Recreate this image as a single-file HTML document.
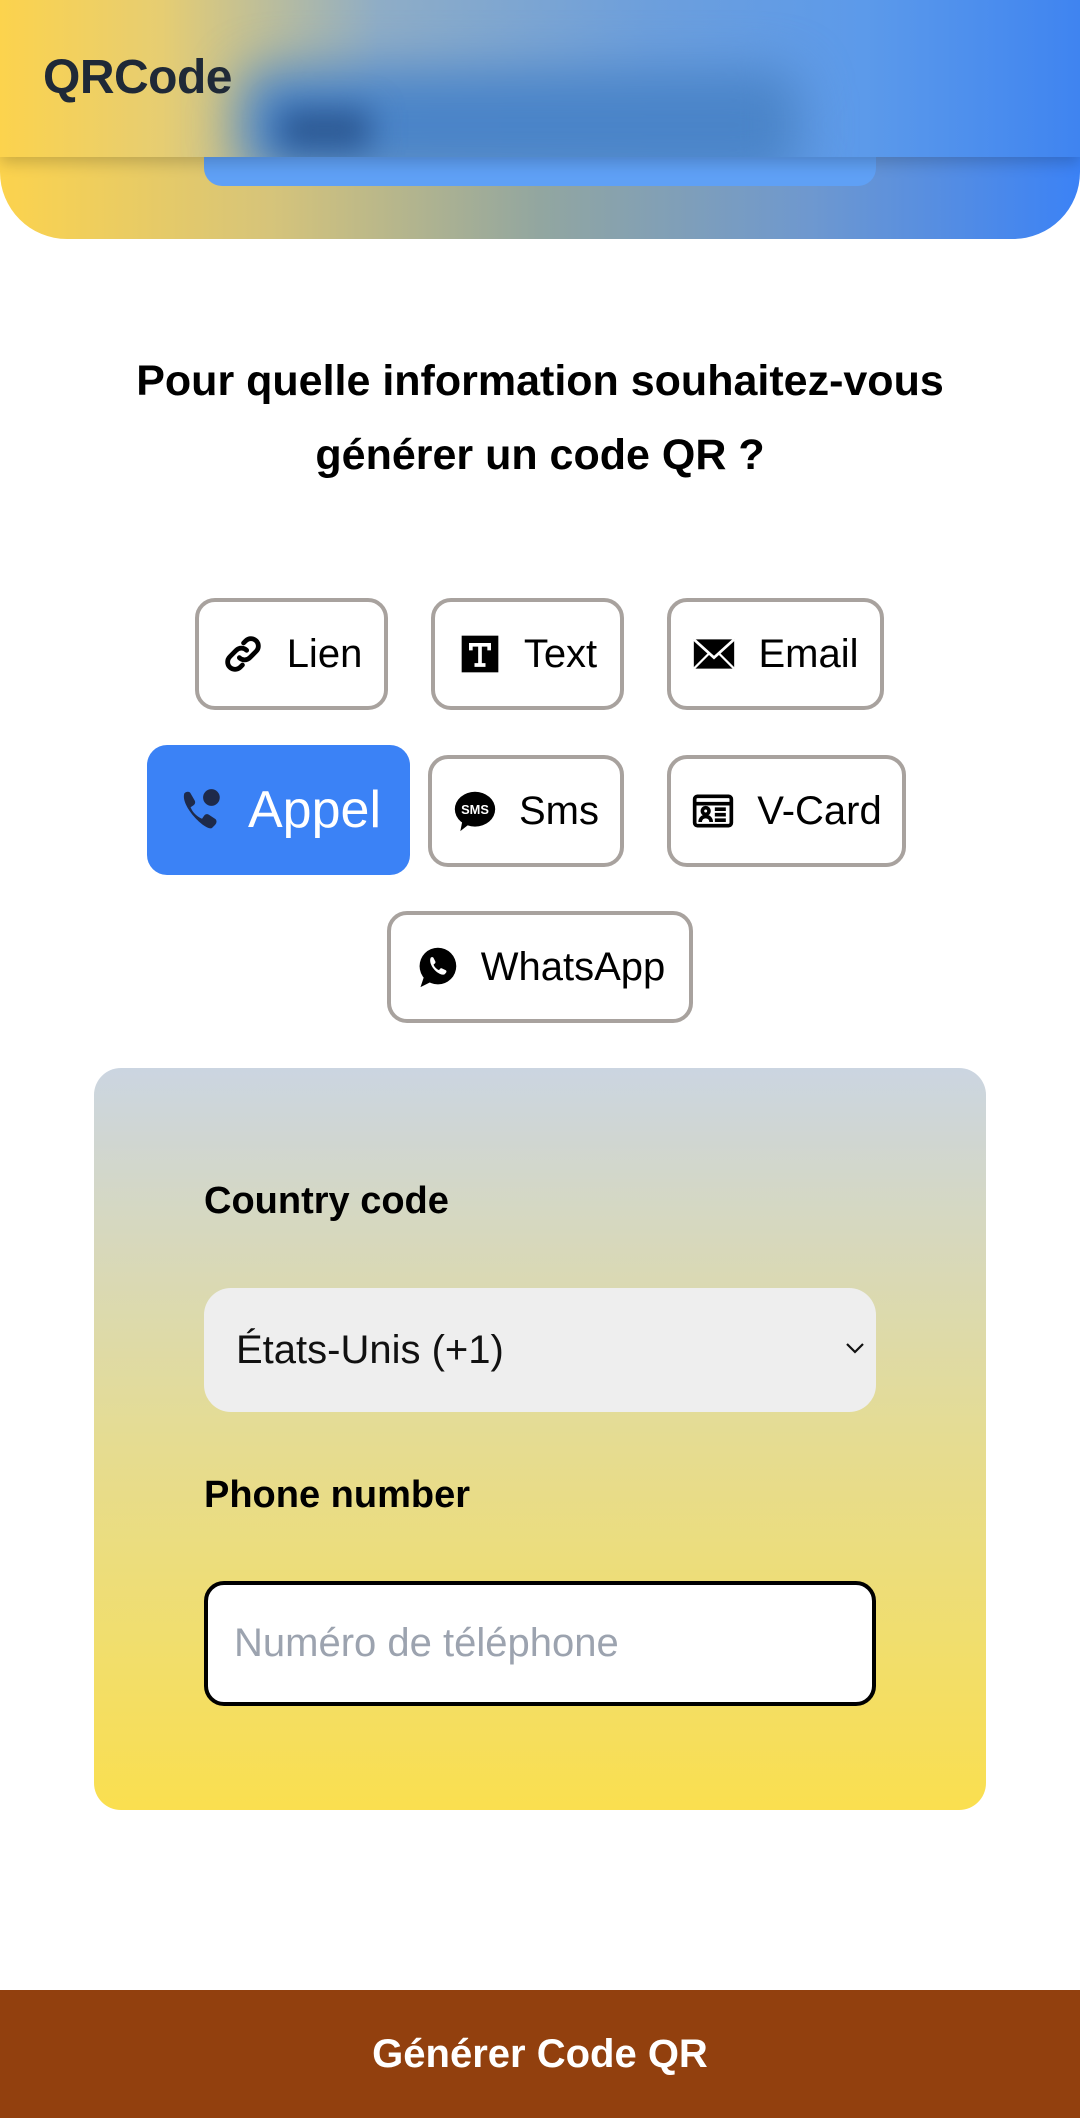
<!DOCTYPE html>
<html><head><meta charset="utf-8"><style>
*{box-sizing:border-box;margin:0;padding:0}
body{width:1080px;height:2118px;position:relative;background:#fff;font-family:"Liberation Sans",Roboto,sans-serif;overflow:hidden}
.hero{position:absolute;left:0;top:0;width:1080px;height:239px;border-radius:0 0 67px 67px;background:linear-gradient(90deg,#fcd34d 0%,#d6c47a 25%,#92a6a0 50%,#6e98cf 75%,#3b82f6 100%);overflow:hidden}
.bar{position:absolute;left:204px;top:120px;width:672px;height:66px;border-radius:0 0 18px 18px;background:#5fa0f5}
.header{position:absolute;left:0;top:0;width:1080px;height:157px;background:linear-gradient(90deg,#fcd34d 0%,#e6cd72 15%,#8fadc6 35%,#6d9fdc 60%,#5c9aea 80%,#3f84f0 100%);box-shadow:0 6px 14px rgba(0,0,0,.18);overflow:hidden}
.blob{position:absolute;left:240px;top:70px;width:560px;height:110px;background:#4a84c8;filter:blur(25px);border-radius:30px}
.blob2{position:absolute;left:280px;top:110px;width:90px;height:40px;background:#2a5690;filter:blur(16px)}
.logo{position:absolute;left:43px;top:50px;font-size:48px;font-weight:bold;color:#1f2937;letter-spacing:-0.5px}
h1{position:absolute;left:0;top:344px;width:1080px;text-align:center;font-size:43px;line-height:74px;font-weight:bold;color:#000}
.b{position:absolute;border:4px solid #a8a29e;border-radius:20px;background:#fff;display:flex;align-items:center;justify-content:center;gap:22px;font-size:40px;color:#000}
.b svg{width:44px;height:44px}
.act{background:#3b82f6;border:none;color:#fff;font-size:52px;border-radius:20px}
.panel{position:absolute;left:94px;top:1068px;width:892px;height:742px;border-radius:27px;background:linear-gradient(180deg,#cbd5e1 0%,#e5dc92 50%,#fadf4f 100%)}
.lbl{position:absolute;left:204px;font-size:38px;font-weight:bold;color:#000}
.sel{position:absolute;left:204px;top:1288px;width:672px;height:124px;border-radius:27px;background:#eeeeee;font-size:40px;padding-left:32px;display:flex;align-items:center;color:#111}
.inp{position:absolute;left:204px;top:1581px;width:672px;height:125px;border:4px solid #000;border-radius:20px;background:#fff;font-size:40px;padding-left:26px;display:flex;align-items:center;color:#9ca3af}
.btn{position:absolute;left:0;top:1990px;width:1080px;height:128px;background:#92400e;color:#fff;font-size:40px;font-weight:bold;display:flex;align-items:center;justify-content:center}
</style></head><body>
<div class="hero"><div class="bar"></div></div>
<div class="header"><div class="blob"></div><div class="blob2"></div><div class="logo">QRCode</div></div>
<h1>Pour quelle information souhaitez-vous<br>générer un code QR ?</h1>

<div class="b" style="left:195px;top:598px;width:193px;height:112px"><svg viewBox="0 0 24 24" fill="none" stroke="#000" stroke-width="2.6" stroke-linecap="round"><path d="M10 14a4 4 0 0 0 5.7 0l3.5-3.5a4 4 0 0 0-5.7-5.7l-1.2 1.2"/><path d="M14 10a4 4 0 0 0-5.7 0l-3.5 3.5a4 4 0 0 0 5.7 5.7l1.2-1.2"/></svg>Lien</div>
<div class="b" style="left:431px;top:598px;width:193px;height:112px"><svg viewBox="0 0 24 24"><rect x="2" y="2" width="20" height="20" fill="#000"/><path d="M6 6h12v4h-2V8h-3v9h2v2H9v-2h2V8H8v2H6z" fill="#fff"/></svg>Text</div>
<div class="b" style="left:667px;top:598px;width:217px;height:112px"><svg viewBox="0 0 24 24"><path d="M1 4h22v16H1z" fill="#000"/><path d="M1 4l11 10L23 4" fill="none" stroke="#fff" stroke-width="1.5"/><path d="M1 20l8-8M23 20l-8-8" stroke="#fff" stroke-width="1.2"/></svg>Email</div>

<div class="b act" style="left:147px;top:745px;width:263px;height:130px"><svg viewBox="0 0 24 24" style="width:50px;height:50px"><path d="M4 4c1-1 2.5-1 3 0l2 3.5c.5 1 0 2-1 2.5l-1 .7c1 2.5 3 4.5 5.5 5.5l.7-1c.5-1 1.5-1.5 2.5-1l3 2c1 .6 1 2 0 3l-1.5 1.5C14 22 2 10 4 4z" fill="#1e2a4a"/><circle cx="17" cy="6" r="4" fill="#1e2a4a"/></svg>Appel</div>
<div class="b" style="left:428px;top:755px;width:196px;height:112px"><svg viewBox="0 0 24 24"><ellipse cx="12" cy="11" rx="11" ry="9.5" fill="#000"/><path d="M5 18l-1 5 5-4z" fill="#000"/><text x="12" y="13.5" font-size="7" font-weight="bold" fill="#fff" text-anchor="middle" font-family="Liberation Sans">SMS</text></svg>Sms</div>
<div class="b" style="left:667px;top:755px;width:239px;height:112px"><svg viewBox="0 0 24 24" fill="none" stroke="#000" stroke-width="2"><rect x="2" y="4" width="20" height="16" rx="1.5"/><path d="M2 8h20M13 11h6M13 14h6M13 17h6"/><circle cx="8" cy="12" r="1.8"/><path d="M5 18c0-2 1.5-3 3-3s3 1 3 3"/></svg>V-Card</div>

<div class="b" style="left:387px;top:911px;width:306px;height:112px"><svg viewBox="0 0 24 24"><circle cx="12.5" cy="11.5" r="10" fill="#000"/><path d="M3 23l2-6 4 3z" fill="#000"/><path d="M8.5 7c.5-.5 1.3-.5 1.6 0l1 2c.2.5 0 1-.5 1.3l-.5.4c.6 1.4 1.700 2.5 3 3l.4-.5c.3-.5.9-.6 1.3-.4l2 1c.5.3.5 1 0 1.5l-.8.8C13 17 7 11 8.5 7z" fill="#fff"/></svg>WhatsApp</div>

<div class="panel"></div>
<div class="lbl" style="top:1180px">Country code</div>
<div class="sel">États-Unis (+1)<svg style="position:absolute;left:640px;top:53px" width="22" height="14" viewBox="0 0 22 14" fill="none" stroke="#111" stroke-width="2.2"><path d="M3 3l8 8 8-8"/></svg></div>
<div class="lbl" style="top:1474px">Phone number</div>
<div class="inp">Numéro de téléphone</div>
<div class="btn">Générer Code QR</div>
</body></html>
